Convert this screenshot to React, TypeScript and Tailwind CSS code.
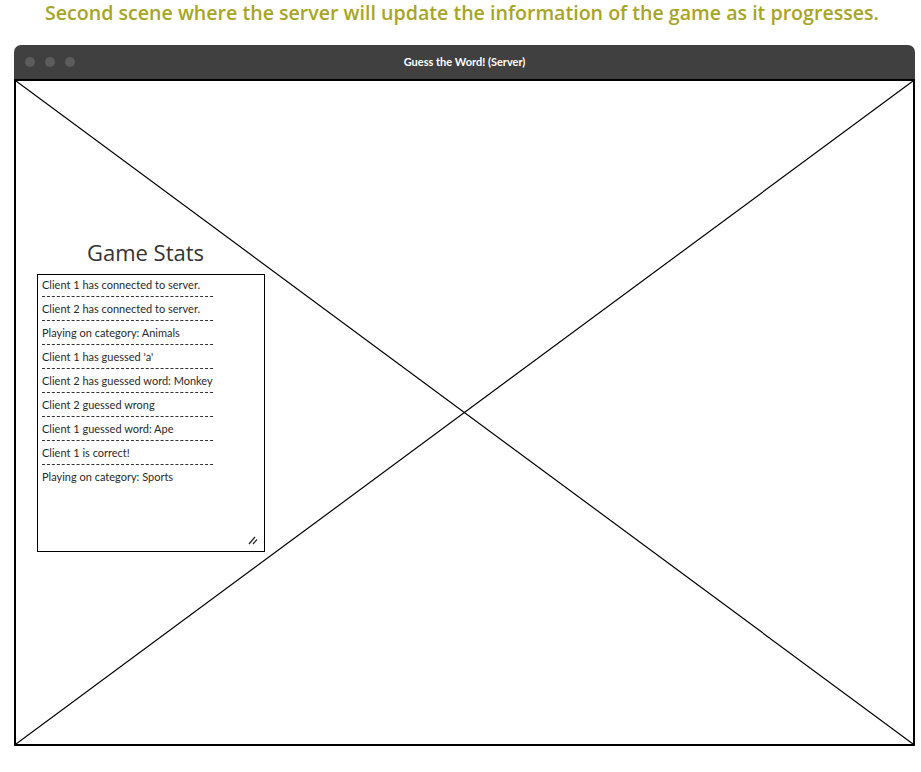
const logLines = [
  'Client 1 has connected to server.',
  'Client 2 has connected to server.',
  'Playing on category: Animals',
  "Client 1 has guessed 'a'",
  'Client 2 has guessed word: Monkey',
  'Client 2 guessed wrong',
  'Client 1 guessed word: Ape',
  'Client 1 is correct!',
  'Playing on category: Sports',
];

export default function App() {
  return (
    <div className="w-[921px] h-[772px] bg-white flex flex-col" style={{ fontFamily: 'Lato, "Open Sans", sans-serif' }}>
      <h1 className="pl-[3px] text-center text-[19.6px] leading-[25px] text-[#a8a426] font-semibold font-['Open_Sans',sans-serif]">
        Second scene where the server will update the information of the game as it progresses.
      </h1>

      <div className="ml-[14px] mt-[20px] w-[901px] flex flex-col">
        <div className="h-[34px] bg-[#404040] rounded-t-[7px] flex items-center relative">
          <div className="flex gap-[10px] pl-[11px]">
            <span className="w-[10px] h-[10px] rounded-full bg-[#5c5c5c]" />
            <span className="w-[10px] h-[10px] rounded-full bg-[#5c5c5c]" />
            <span className="w-[10px] h-[10px] rounded-full bg-[#5c5c5c]" />
          </div>
          <span className="absolute left-0 right-0 text-center text-[11px] font-bold text-white">
            Guess the Word! (Server)
          </span>
        </div>

        <div className="relative h-[667px] border-2 border-black bg-white">
          <svg className="absolute inset-0 w-full h-full" viewBox="0 0 897 663" preserveAspectRatio="none">
            <line x1="0" y1="0" x2="897" y2="663" stroke="#000" strokeWidth="1.2" />
            <line x1="0" y1="663" x2="897" y2="0" stroke="#000" strokeWidth="1.2" />
          </svg>

          <div className="relative pt-[157px] pl-[21px] flex flex-col w-[250px]">
            <div className="w-[228px] pr-[11px] text-center text-[22px] leading-[28px] text-[#333] font-['Open_Sans',sans-serif]">
              Game Stats
            </div>
            <div className="relative mt-[8px] w-[228px] h-[278px] border border-black bg-white px-[4px] pt-[2px]">
              {logLines.map((line, i) => (
                <div key={i} className="w-[171px]">
                  <div className="text-[11px] leading-[16px] text-[#2a2a2a] whitespace-nowrap">{line}</div>
                  {i < logLines.length - 1 && (
                    <div className="border-t border-dashed border-[#333] mt-[3px] mb-[4px]" />
                  )}
                </div>
              ))}
              <svg className="absolute right-[6px] bottom-[6px]" width="10" height="10" viewBox="0 0 10 10">
                <line x1="1" y1="9" x2="7" y2="2" stroke="#222" strokeWidth="1.2" />
                <line x1="5" y1="9" x2="9" y2="4.5" stroke="#222" strokeWidth="1.2" />
              </svg>
            </div>
          </div>
        </div>
      </div>
    </div>
  );
}
